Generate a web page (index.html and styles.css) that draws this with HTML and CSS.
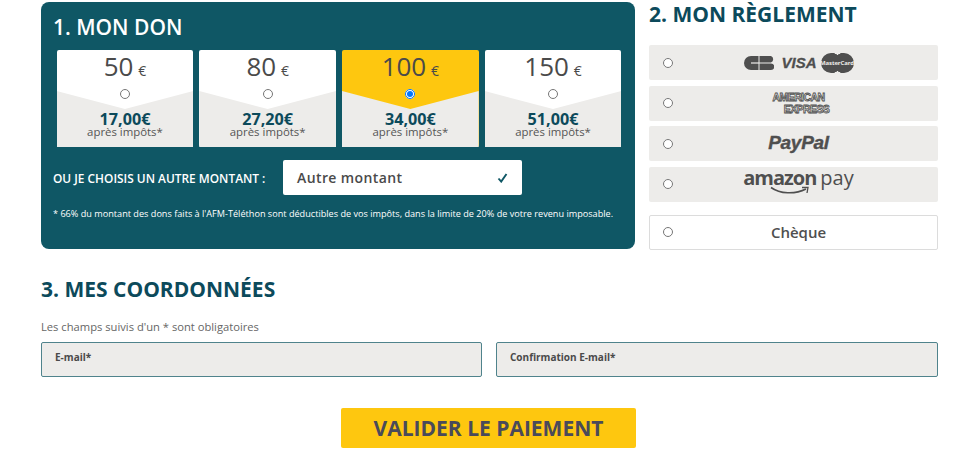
FILE: index.html
```html
<!DOCTYPE html>
<html lang="fr">
<head>
    <meta charset="utf-8">
    <title>Mon don</title>
    <link rel="stylesheet" href="styles.css">
</head>
<body>
    <form class="page">
        <div class="top-row">
            <section class="don-panel">
                <h2 class="don-title">1. MON DON</h2>
                <div class="cards">
                    <label class="card">
                        <span class="amount">50 <small>€</small></span>
                        <input type="radio" name="don">
                        <strong class="price">17,00€</strong>
                        <span class="after-tax">après impôts*</span>
                    </label>
                    <label class="card">
                        <span class="amount">80 <small>€</small></span>
                        <input type="radio" name="don">
                        <strong class="price">27,20€</strong>
                        <span class="after-tax">après impôts*</span>
                    </label>
                    <label class="card card-selected">
                        <span class="amount">100 <small>€</small></span>
                        <input type="radio" name="don" checked>
                        <strong class="price">34,00€</strong>
                        <span class="after-tax">après impôts*</span>
                    </label>
                    <label class="card">
                        <span class="amount">150 <small>€</small></span>
                        <input type="radio" name="don">
                        <strong class="price">51,00€</strong>
                        <span class="after-tax">après impôts*</span>
                    </label>
                </div>
                <div class="other-row">
                    <span class="other-label">OU JE CHOISIS UN AUTRE MONTANT :</span>
                    <div class="other-box">
                        <span>Autre montant</span>
                        <svg class="check" width="11" height="10" viewBox="0 0 11 10"><path d="M1.5 5.5 L4.2 8.6 L9.5 1" fill="none" stroke="#0f5765" stroke-width="1.9"/></svg>
                    </div>
                </div>
                <p class="note">* 66% du montant des dons faits à l'AFM-Téléthon sont déductibles de vos impôts, dans la limite de 20% de votre revenu imposable.</p>
            </section>

            <section class="reglement">
                <h2 class="section-title">2. MON RÈGLEMENT</h2>
                <label class="pay-option">
                    <input type="radio" name="pay">
                    <span class="pay-logo logo-cards">
                        <svg width="30" height="14" viewBox="0 0 30 14">
                            <path d="M7 0 H14.5 V14 H7 A7 7 0 0 1 7 0 Z" fill="#4f4f4f"/>
                            <path d="M15.5 0 H27 A3.5 3.5 0 0 1 27 6.5 H15.5 Z M15.5 7.5 H27 A3.2 3.2 0 0 1 27 14 H15.5 Z" fill="#4f4f4f"/>
                            <rect x="7" y="6.4" width="8" height="1.2" fill="#edecea"/>
                        </svg>
                        <span class="visa">VISA</span>
                        <span class="mastercard">MasterCard</span>
                    </span>
                </label>
                <label class="pay-option">
                    <input type="radio" name="pay">
                    <span class="pay-logo amex"><span>AMERICAN</span><span class="amex-second">EXPRESS</span></span>
                </label>
                <label class="pay-option">
                    <input type="radio" name="pay">
                    <span class="pay-logo paypal">PayPal</span>
                </label>
                <label class="pay-option">
                    <input type="radio" name="pay">
                    <span class="pay-logo amazon">
                        <span class="amazon-word">amazon</span><span class="amazon-pay">pay</span>
                        <svg class="smile" width="40" height="9" viewBox="0 0 40 9"><path d="M1 1.5 C10 8 25 8.5 36 3" fill="none" stroke="#4f4f4f" stroke-width="1.6"/><path d="M32 1.5 L38 1.5 L37 7" fill="none" stroke="#4f4f4f" stroke-width="1.3"/></svg>
                    </span>
                </label>
                <label class="pay-option pay-cheque">
                    <input type="radio" name="pay">
                    <span class="pay-logo">Chèque</span>
                </label>
            </section>
        </div>

        <section class="coords">
            <h2 class="section-title">3. MES COORDONNÉES</h2>
            <p class="required">Les champs suivis d'un * sont obligatoires</p>
            <div class="fields">
                <input type="email" placeholder="E-mail*">
                <input type="email" placeholder="Confirmation E-mail*">
            </div>
        </section>

        <div class="submit-row">
            <button type="button" class="submit">VALIDER LE PAIEMENT</button>
        </div>
    </form>
</body>
</html>
```

FILE: styles.css
```css
body {
    margin: 0;
    padding: 0;
    background: #fff;
    font-family: "Open Sans", sans-serif;
    color: #4a4a4a;
}
.page {
    padding: 2px 42px 0 41px;
}
.top-row {
    display: flex;
    gap: 14px;
}
h2, p {
    margin: 0;
}

/* don */
.don-panel {
    width: 594px;
    height: 247px;
    box-sizing: border-box;
    padding: 12px 13px 0 16px;
    background: #0f5765;
    border-radius: 8px;
    color: #fff;
}
.don-title {
    margin-left: -4px;
    font-size: 21px;
    line-height: 27px;
    font-weight: 600;
}
.cards {
    display: flex;
    gap: 6px;
    margin-top: 9px;
    margin-left: -0.4px;
}
.card {
    position: relative;
    flex: 0 0 136.7px;
    height: 97px;
    display: flex;
    flex-direction: column;
    align-items: center;
    background: #fff;
    border-radius: 2px;
}
.card::before {
    content: "";
    position: absolute;
    left: 0;
    right: 0;
    top: 41px;
    bottom: 0;
    background: #edecea;
    clip-path: polygon(0 0, 50% 18px, 100% 0, 100% 100%, 0 100%);
}
.card > * {
    position: relative;
}
.card-selected {
    background: #fec70f;
}
.amount {
    font-size: 26px;
    line-height: 32px;
    word-spacing: -2px;
    color: #4a4a4a;
}
.amount small {
    font-size: 14px;
    line-height: 1;
}
.card input {
    width: 10px;
    height: 10px;
    margin: 7px 0 0;
}
.price {
    margin-top: 12px;
    font-size: 16.2px;
    line-height: 17px;
    font-weight: 700;
    color: #0c4a5b;
}
.after-tax {
    margin-top: -3px;
    font-size: 11.4px;
    line-height: 14px;
    color: #555;
}
.other-row {
    display: flex;
    align-items: center;
    margin-top: 13px;
    margin-left: -4px;
}
.other-label {
    width: 230px;
    font-size: 11.9px;
    font-weight: 600;
}
.other-box {
    width: 239px;
    height: 35px;
    box-sizing: border-box;
    padding: 0 14px;
    display: flex;
    align-items: center;
    justify-content: space-between;
    background: #fff;
    border-radius: 2px;
    color: #4a4a4a;
    font-size: 14px;
    font-weight: 600;
    letter-spacing: 0.4px;
}
.note {
    margin-top: 12px;
    margin-left: -4px;
    margin-right: -4px;
    font-size: 9.15px;
    line-height: 13px;
    white-space: nowrap;
}

/* reglement */
.reglement {
    width: 289px;
}
.section-title {
    font-size: 21px;
    line-height: 27px;
    font-weight: 700;
    color: #0c4a5b;
}
.reglement .section-title {
    margin-top: -1px;
}
.pay-option {
    display: flex;
    align-items: center;
    height: 35px;
    margin-bottom: 5.67px;
    padding: 0 14px;
    box-sizing: border-box;
    background: #edecea;
    border-radius: 2px;
}
.reglement .section-title + .pay-option {
    margin-top: 17px;
}
.pay-option input {
    width: 10px;
    height: 10px;
    margin: 0;
}
.pay-logo {
    flex: 1;
    display: flex;
    justify-content: center;
    align-items: center;
    color: #4f4f4f;
}
.logo-cards {
    gap: 7px;
    margin-left: 1px;
}
.visa {
    font-family: "Liberation Sans", sans-serif;
    font-size: 15px;
    font-weight: 700;
    font-style: italic;
    -webkit-text-stroke: 0.3px #4f4f4f;
}
.mastercard {
    width: 33px;
    height: 20px;
    margin-left: -3px;
    display: flex;
    align-items: center;
    justify-content: center;
    white-space: nowrap;
    border-radius: 10px;
    background: radial-gradient(circle at 10px 10px, #4f4f4f 10px, transparent 10.5px), radial-gradient(circle at 23px 10px, #4f4f4f 10px, transparent 10.5px);
    color: #edecea;
    font-size: 6px;
    font-weight: 700;
    letter-spacing: -0.1px;
}
.amex {
    flex-direction: column;
    font-family: "Liberation Sans", sans-serif;
    font-size: 10.5px;
    line-height: 12px;
    font-weight: 700;
    color: #edecea;
    -webkit-text-stroke: 0.8px #4f4f4f;
    letter-spacing: -0.6px;
}
.amex-second {
    margin-left: 16px;
}
.paypal {
    font-family: "Liberation Sans", sans-serif;
    font-size: 19px;
    font-weight: 700;
    font-style: italic;
    letter-spacing: -0.3px;
    padding-bottom: 2px;
    -webkit-text-stroke: 0.4px #4f4f4f;
}
.amazon {
    position: relative;
    padding-bottom: 12px;
    gap: 4px;
    font-size: 20px;
    line-height: 24px;
}
.amazon-word {
    font-weight: 700;
    letter-spacing: -1px;
}
.amazon-pay {
    font-weight: 400;
}
.smile {
    position: absolute;
    left: 97px;
    bottom: 7px;
}
.pay-cheque {
    margin-top: 13px;
    margin-bottom: 0;
    padding: 0 13px;
    background: #fff;
    border: 1px solid #dcdcdc;
    font-size: 15px;
    font-weight: 600;
}

/* coordonnees */
.coords {
    margin-top: 26px;
}
.required {
    margin-top: 16px;
    font-size: 11.2px;
    line-height: 15px;
    color: #666;
}
.fields {
    display: grid;
    grid-template-columns: 441px 442px;
    gap: 14px;
    margin-top: 8px;
}
.fields input {
    height: 35px;
    box-sizing: border-box;
    padding: 0 13px 5px;
    background: #edecea;
    border: 1px solid #4f838c;
    border-radius: 2px;
    font-family: "Open Sans", sans-serif;
    font-size: 10px;
    font-weight: 700;
}
.fields input::placeholder {
    color: #4a4a4a;
    opacity: 1;
}
.submit-row {
    display: flex;
    justify-content: center;
    margin-top: 31px;
    padding-right: 2px;
}
.submit {
    width: 295px;
    height: 40px;
    border: 0;
    border-radius: 2px;
    background: #fec70f;
    color: #4a4a5a;
    font-family: "Open Sans", sans-serif;
    font-size: 21px;
    font-weight: 700;
}
```
